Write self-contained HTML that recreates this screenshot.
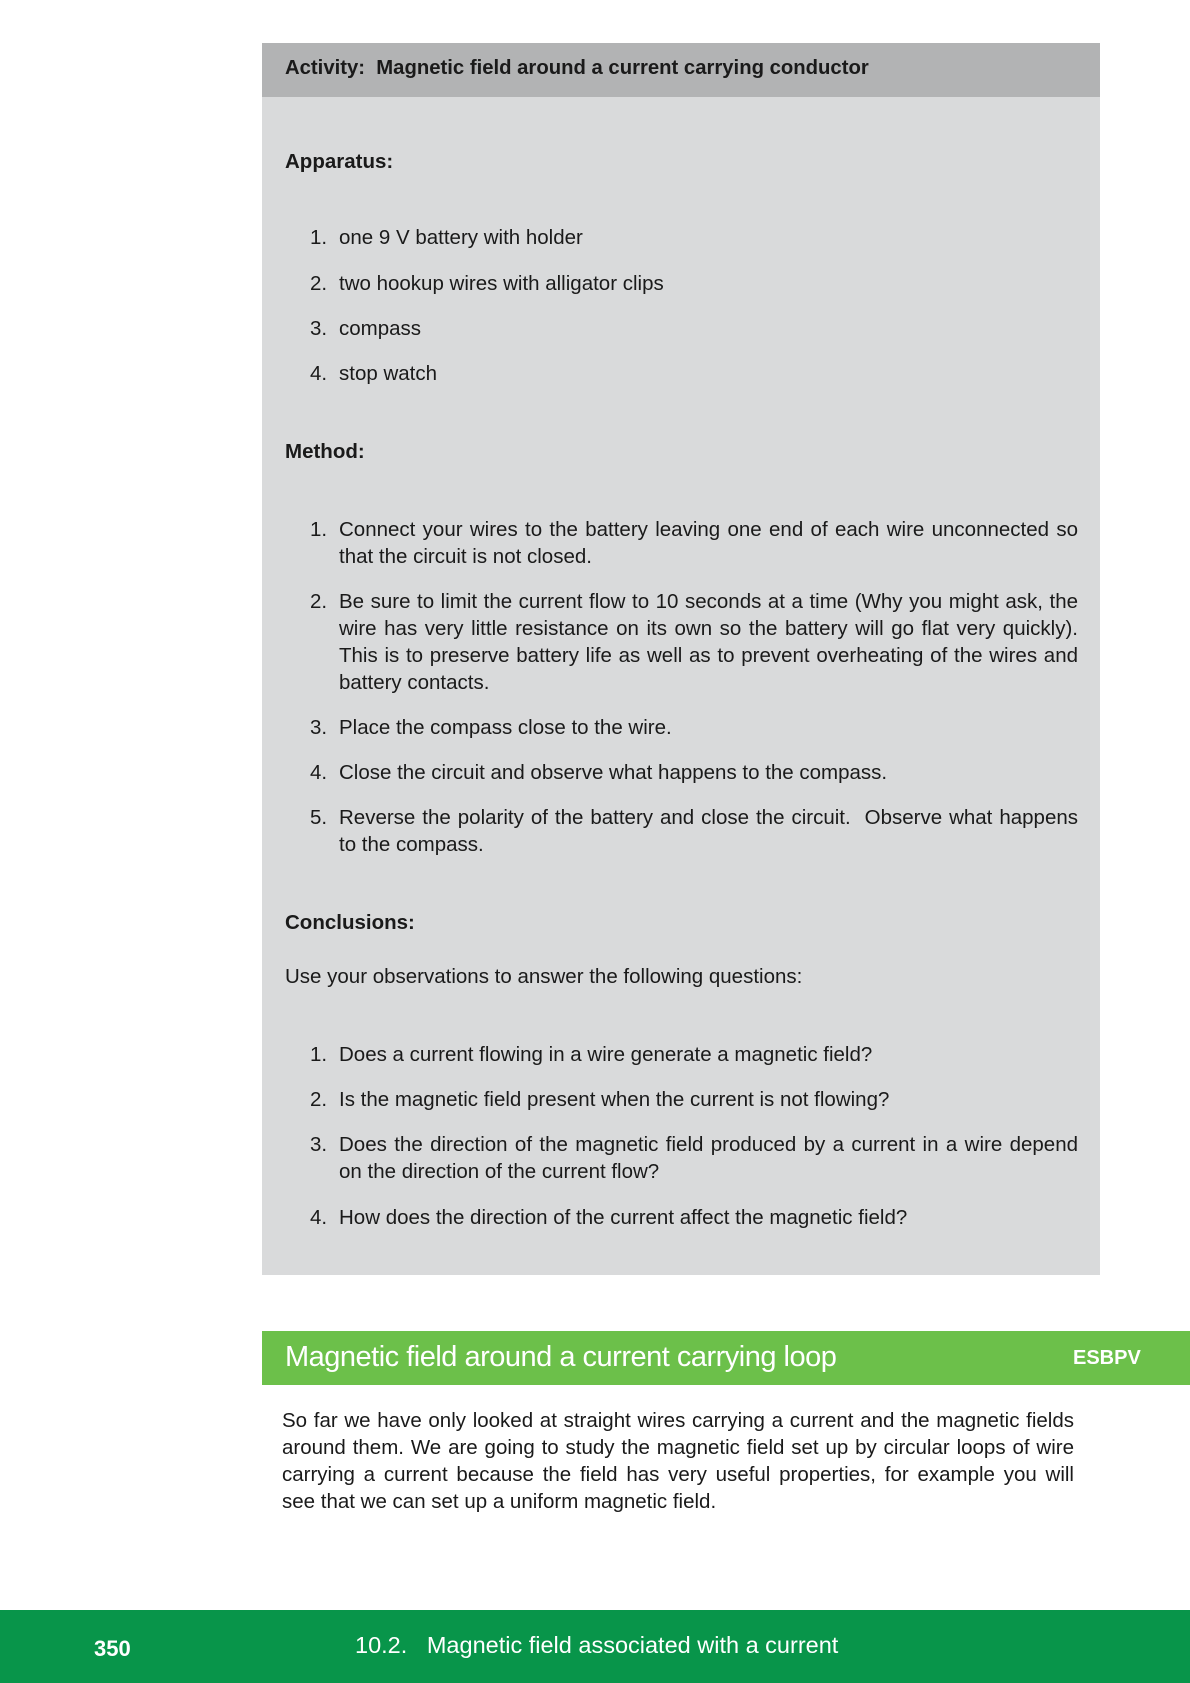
<!DOCTYPE html>
<html><head><meta charset="utf-8"><style>
html,body{margin:0;padding:0;background:#fff;}
body{width:1190px;height:1683px;position:relative;overflow:hidden;font-family:"Liberation Sans",sans-serif;color:#1a1a1a;}
.a{position:absolute;font-size:20.5px;line-height:27px;white-space:nowrap;}
.j{width:739px;}
.j span{display:block;white-space:nowrap;text-align:justify;text-align-last:justify;}
.j span.l{text-align-last:left;}
.b{font-weight:bold;}
.n{position:absolute;font-size:20.5px;line-height:27px;}
</style></head><body>
<div style="position:absolute;left:262px;top:43px;width:838px;height:1232px;background:#d9dadb;"></div>
<div style="position:absolute;left:262px;top:43px;width:838px;height:54px;background:#b2b3b4;"></div>
<div class="a b" style="left:285px;top:55px;font-size:20.3px;">Activity:&nbsp; Magnetic field around a current carrying conductor</div>
<div class="a b" style="left:285px;top:148px;">Apparatus:</div>

<div class="n" style="left:310px;top:224px;">1.</div><div class="a" style="left:339px;top:224px;">one 9 V battery with holder</div>
<div class="n" style="left:310px;top:270px;">2.</div><div class="a" style="left:339px;top:270px;">two hookup wires with alligator clips</div>
<div class="n" style="left:310px;top:315px;">3.</div><div class="a" style="left:339px;top:315px;">compass</div>
<div class="n" style="left:310px;top:360px;">4.</div><div class="a" style="left:339px;top:360px;">stop watch</div>

<div class="a b" style="left:285px;top:438px;">Method:</div>

<div class="n" style="left:310px;top:516px;">1.</div><div class="a j" style="left:339px;top:516px;"><span>Connect your wires to the battery leaving one end of each wire unconnected so</span><span class="l">that the circuit is not closed.</span></div>
<div class="n" style="left:310px;top:588px;">2.</div><div class="a j" style="left:339px;top:588px;"><span>Be sure to limit the current flow to 10 seconds at a time (Why you might ask, the</span><span>wire has very little resistance on its own so the battery will go flat very quickly).</span><span>This is to preserve battery life as well as to prevent overheating of the wires and</span><span class="l">battery contacts.</span></div>
<div class="n" style="left:310px;top:714px;">3.</div><div class="a" style="left:339px;top:714px;">Place the compass close to the wire.</div>
<div class="n" style="left:310px;top:759px;">4.</div><div class="a" style="left:339px;top:759px;">Close the circuit and observe what happens to the compass.</div>
<div class="n" style="left:310px;top:804px;">5.</div><div class="a j" style="left:339px;top:804px;"><span>Reverse the polarity of the battery and close the circuit.&nbsp; Observe what happens</span><span class="l">to the compass.</span></div>

<div class="a b" style="left:285px;top:909px;">Conclusions:</div>
<div class="a" style="left:285px;top:963px;">Use your observations to answer the following questions:</div>

<div class="n" style="left:310px;top:1041px;">1.</div><div class="a" style="left:339px;top:1041px;">Does a current flowing in a wire generate a magnetic field?</div>
<div class="n" style="left:310px;top:1086px;">2.</div><div class="a" style="left:339px;top:1086px;">Is the magnetic field present when the current is not flowing?</div>
<div class="n" style="left:310px;top:1131px;">3.</div><div class="a j" style="left:339px;top:1131px;"><span>Does the direction of the magnetic field produced by a current in a wire depend</span><span class="l">on the direction of the current flow?</span></div>
<div class="n" style="left:310px;top:1204px;">4.</div><div class="a" style="left:339px;top:1204px;">How does the direction of the current affect the magnetic field?</div>

<div style="position:absolute;left:262px;top:1331px;width:928px;height:54px;background:#6cc04a;"></div>
<div class="a" style="left:285px;top:1340px;font-size:29px;line-height:34px;color:#fff;letter-spacing:-0.5px;">Magnetic field around a current carrying loop</div>
<div class="a b" style="left:1073px;top:1345px;font-size:20px;color:#fff;">ESBPV</div>

<div class="a j" style="left:282px;top:1407px;width:792px;"><span>So far we have only looked at straight wires carrying a current and the magnetic fields</span><span>around them. We are going to study the magnetic field set up by circular loops of wire</span><span>carrying a current because the field has very useful properties, for example you will</span><span class="l">see that we can set up a uniform magnetic field.</span></div>

<div style="position:absolute;left:0;top:1610px;width:1190px;height:73px;background:#08954a;"></div>
<div class="a b" style="left:94px;top:1635px;font-size:22px;color:#fff;">350</div>
<div class="a" style="left:355px;top:1632px;font-size:23.5px;color:#fff;">10.2.&nbsp;&nbsp; Magnetic field associated with a current</div>
</body></html>
